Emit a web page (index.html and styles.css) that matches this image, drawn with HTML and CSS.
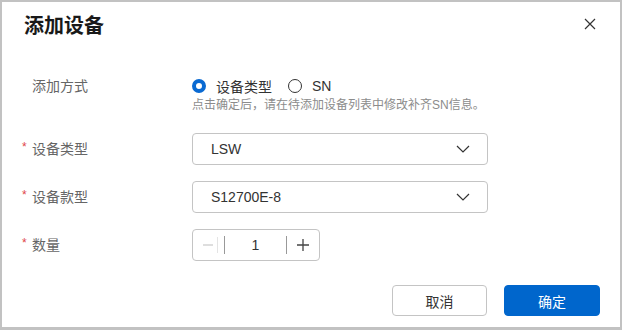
FILE: index.html
```html
<!DOCTYPE html>
<html lang="zh-CN">
<head>
    <meta charset="UTF-8">
    <title>添加设备</title>
    <link rel="stylesheet" href="styles.css">
</head>
<body>
    <div class="dialog">
        <div class="dialog-header">
            <h1>添加设备</h1>
            <button class="close-btn" aria-label="关闭">
                <svg width="12" height="12" viewBox="0 0 12 12"><path d="M1 1L11 11M11 1L1 11" stroke="#333" stroke-width="1.2" fill="none"/></svg>
            </button>
        </div>

        <div class="form">
            <div class="form-row mode-row">
                <div class="form-label">添加方式</div>
                <div class="form-field">
                    <div class="radio-group">
                        <label class="radio checked"><span class="radio-dot"></span>设备类型</label>
                        <label class="radio"><span class="radio-dot"></span>SN</label>
                    </div>
                    <div class="hint">点击确定后，请在待添加设备列表中修改补齐SN信息。</div>
                </div>
            </div>

            <div class="form-row">
                <div class="form-label required">设备类型</div>
                <div class="select">
                    <span>LSW</span>
                    <svg width="14" height="8" viewBox="0 0 14 8"><path d="M1 1L7 7L13 1" stroke="#333" stroke-width="1.2" fill="none"/></svg>
                </div>
            </div>

            <div class="form-row">
                <div class="form-label required">设备款型</div>
                <div class="select">
                    <span>S12700E-8</span>
                    <svg width="14" height="8" viewBox="0 0 14 8"><path d="M1 1L7 7L13 1" stroke="#333" stroke-width="1.2" fill="none"/></svg>
                </div>
            </div>

            <div class="form-row">
                <div class="form-label required">数量</div>
                <div class="stepper">
                    <span class="step-btn minus disabled">
                        <svg width="10" height="10" viewBox="0 0 10 10"><path d="M0 5H10" stroke="#c8c8c8" stroke-width="1.2"/></svg>
                        <i class="faint-line"></i>
                    </span>
                    <span class="step-value">1</span>
                    <span class="step-btn plus">
                        <svg width="12" height="12" viewBox="0 0 12 12"><path d="M0 6H12M6 0V12" stroke="#444" stroke-width="1.3"/></svg>
                    </span>
                </div>
            </div>
        </div>

        <div class="dialog-footer">
            <button class="btn">取消</button>
            <button class="btn btn-primary">确定</button>
        </div>
    </div>
</body>
</html>
```

FILE: styles.css
```css
* {
    margin: 0;
    padding: 0;
    box-sizing: border-box;
}

body {
    font-family: "Liberation Sans", "Noto Sans CJK SC", sans-serif;
    background: #fff;
    color: #333;
}

.dialog {
    width: 622px;
    height: 330px;
    border: 2px solid #c2c2c2;
    border-bottom-width: 3px;
    background: #fff;
    display: flex;
    flex-direction: column;
}

.dialog-header {
    height: 48px;
    display: flex;
    align-items: center;
    justify-content: space-between;
    padding: 0 22px 4px 22px;
}

.dialog-header h1 {
    font-size: 20px;
    font-weight: 700;
    color: #191919;
}

.close-btn {
    background: none;
    border: none;
    width: 16px;
    height: 16px;
    display: flex;
    align-items: center;
    justify-content: center;
    cursor: pointer;
}

/* form */
.form {
    padding: 26px 0 0 20px;
}

.form-row {
    display: flex;
    align-items: center;
    margin-bottom: 16px;
}

.form-row.mode-row {
    align-items: flex-start;
    margin-bottom: 20px;
}

.form-label {
    width: 170px;
    padding-left: 10px;
    font-size: 14px;
    line-height: 20px;
    color: #666;
    position: relative;
}

.form-label.required::before {
    content: '*';
    color: #e0464a;
    font-size: 12px;
    position: absolute;
    left: 0;
    top: -2px;
}

.radio-group {
    display: flex;
    gap: 16px;
    height: 20px;
    align-items: center;
}

.radio {
    display: flex;
    align-items: center;
    gap: 10px;
    font-size: 14px;
    color: #333;
}

.radio-dot {
    width: 14px;
    height: 14px;
    border: 1px solid #333;
    border-radius: 50%;
    display: inline-block;
}

.radio.checked .radio-dot {
    border: 4.5px solid #0a6ad2;
    background: #fff;
}

.hint {
    font-size: 12px;
    line-height: 16px;
    color: #8c8c8c;
    margin-top: 1px;
}

.select {
    width: 296px;
    height: 32px;
    border: 1px solid #c4c4c4;
    border-radius: 4px;
    display: flex;
    align-items: center;
    justify-content: space-between;
    padding: 0 17px 0 18px;
    font-size: 14px;
    color: #333;
}

.stepper {
    width: 128px;
    height: 32px;
    border: 1px solid #c4c4c4;
    border-radius: 4px;
    display: flex;
    align-items: center;
}

.step-btn {
    display: flex;
    align-items: center;
    height: 18px;
}

.step-btn.minus {
    width: 31px;
    padding-left: 10px;
    gap: 4px;
}

.faint-line {
    width: 1px;
    height: 16px;
    background: #e4e4e4;
}

.step-value {
    flex: 1;
    height: 18px;
    border-left: 1px solid #999;
    border-right: 1px solid #999;
    text-align: center;
    font-size: 14px;
    line-height: 18px;
    color: #333;
}

.step-btn.plus {
    width: 32px;
    justify-content: center;
}

/* footer */
.dialog-footer {
    display: flex;
    justify-content: flex-end;
    gap: 17px;
    padding: 8px 20px 0 0;
}

.btn {
    width: 95px;
    height: 31px;
    border: 1px solid #c4c4c4;
    border-radius: 4px;
    background: #fff;
    font-family: inherit;
    font-size: 14px;
    color: #333;
    cursor: pointer;
}

.btn-primary {
    width: 96px;
    background: #0066cc;
    border-color: #0066cc;
    color: #fff;
}
```
